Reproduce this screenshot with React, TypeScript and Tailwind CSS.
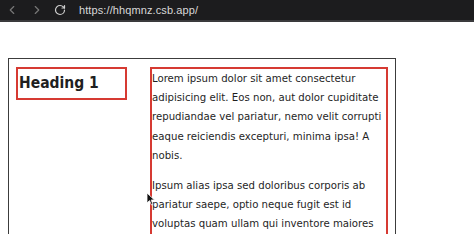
import { ChevronLeft, ChevronRight, RotateCw } from 'lucide-react';

// Browser chrome at the top of the capture
function AddressBar() {
  return (
    <div className="h-[22px] bg-[#1c1c1e] border-b-2 border-[#3a3a3c] flex items-center text-[#d8d8d8]">
      <ChevronLeft className="ml-[5px] w-[14px] h-[14px] text-[#777]" strokeWidth={2} />
      <ChevronRight className="ml-[11px] w-[14px] h-[14px] text-[#777]" strokeWidth={2} />
      <RotateCw className="ml-[10px] w-[12px] h-[12px] text-[#cfcfcf]" strokeWidth={2.4} />
      <span className="ml-[13px] text-[11px] font-['Liberation_Sans',sans-serif] tracking-[0.1px]">
        https://hhqmnz.csb.app/
      </span>
    </div>
  );
}

function Cursor() {
  return (
    <svg className="absolute left-[146px] top-[192px] w-[10px] h-[14px]" viewBox="0 0 10 14">
      <path d="M1 1 L1 11 L3.5 8.6 L5.5 13 L7 12.3 L5.1 8 L8.5 8 Z" fill="#111" stroke="#fff" strokeWidth="0.8" />
    </svg>
  );
}

export default function App() {
  return (
    <div className="relative w-[474px] h-[234px] overflow-hidden bg-white font-['DejaVu_Sans_Condensed','DejaVu_Sans',sans-serif] text-[#1f1f1f]">
      <AddressBar />
      <div className="pt-[36px] pl-[8px]">
        <div className="w-[388px] h-[200px] border border-[#3c3c3c] border-b-0 px-[7px] pt-[8px] flex gap-[23px]">
          {/* Heading column */}
          <div className="w-[111px] h-[33px] border-2 border-[#d63a32] flex items-center pl-[1px] pt-[1px]">
            <h1 className="text-[15.5px] font-bold leading-none">Heading 1</h1>
          </div>
          {/* Text column */}
          <div className="w-[238px] border-2 border-[#d63a32] border-b-0 text-[11.3px] leading-[19.2px]">
            <p>
              Lorem ipsum dolor sit amet consectetur adipisicing elit. Eos non, aut dolor cupiditate
              repudiandae vel pariatur, nemo velit corrupti eaque reiciendis excepturi, minima ipsa! A
              nobis.
            </p>
            <p className="mt-[11px]">
              Ipsum alias ipsa sed doloribus corporis ab pariatur saepe, optio neque fugit est id
              voluptas quam ullam qui inventore maiores quo nihil quod dolores explicabo nobis
              laboriosam.
            </p>
          </div>
        </div>
      </div>
      <Cursor />
    </div>
  );
}
